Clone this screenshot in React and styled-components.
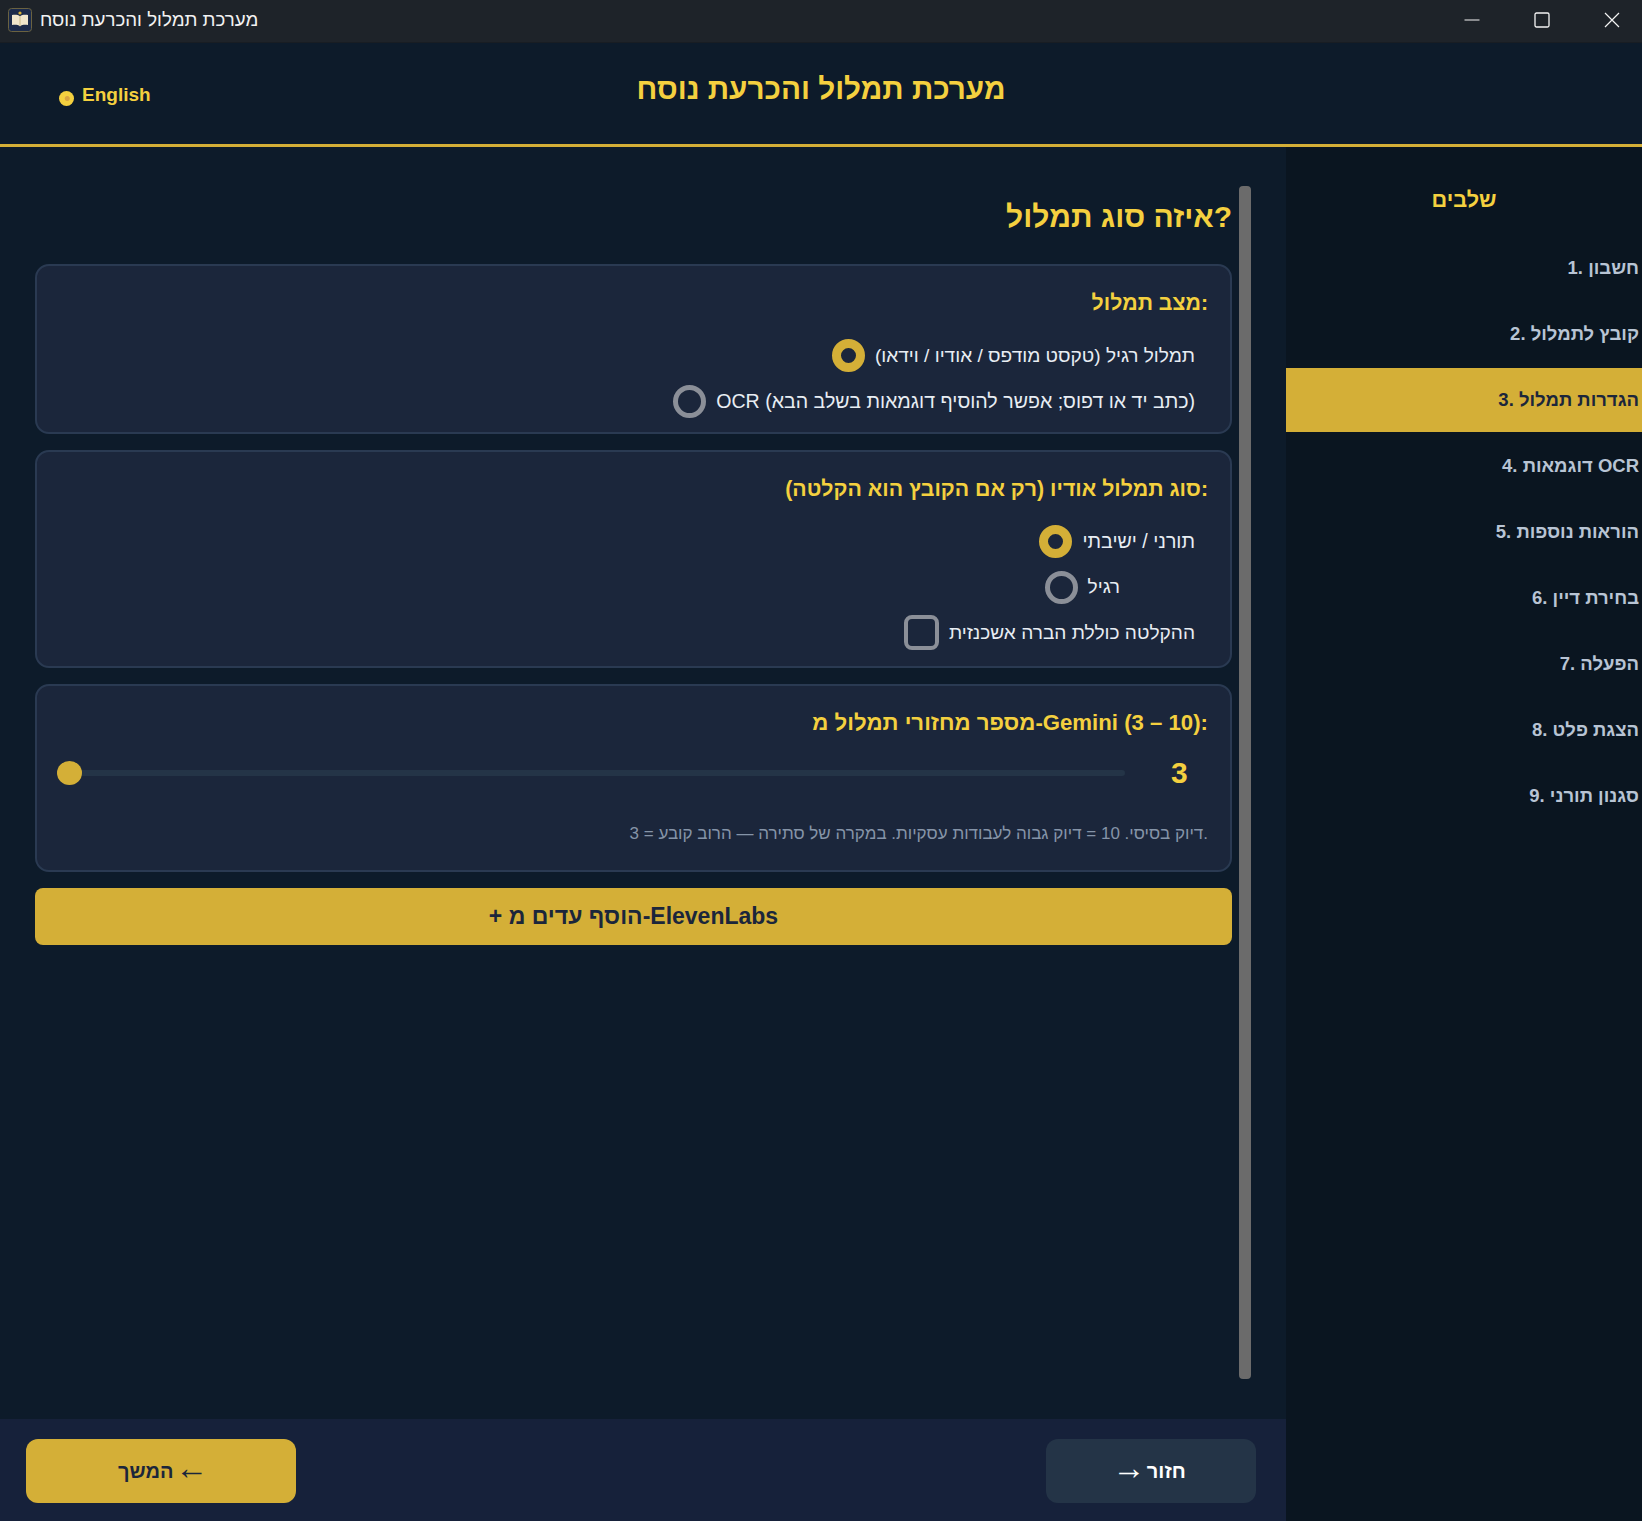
import React from 'react';
import styled, { createGlobalStyle } from 'styled-components';

const GOLD = '#d4af37';
const GOLD_TEXT = '#f4d03f';

const GlobalStyle = createGlobalStyle`
  html, body, #root {
    margin: 0;
    height: 100%;
  }
  body {
    background: #0d1b2a;
    font-family: "Liberation Sans", Arial, sans-serif;
  }
  * {
    box-sizing: border-box;
  }
`;

const Window = styled.div`
  height: 100%;
  display: flex;
  flex-direction: column;
  overflow: hidden;
`;

/* Title bar of the native window */
const TitleBar = styled.div`
  height: 43px;
  flex: none;
  display: flex;
  align-items: center;
  padding: 0 0 3px 8px;
  background: #1e2329;
  border-bottom: 1px solid #181d23;
`;

const AppTitle = styled.span`
  margin-left: 8px;
  flex: 1;
  color: #f2f2f2;
  font-size: 18.7px;
`;

const WinControls = styled.div`
  display: flex;
  margin-right: -5px;
`;

const WinButton = styled.div`
  width: 70px;
  height: 38px;
  display: flex;
  align-items: center;
  justify-content: center;
  color: #f4f4f4;
`;

const Header = styled.header`
  height: 104px;
  flex: none;
  position: relative;
  display: flex;
  align-items: center;
  justify-content: center;
  background: #0d1b2a;
  border-bottom: 3px solid ${GOLD};
`;

const HeaderTitle = styled.h1`
  margin: 0 0 10px;
  color: ${GOLD_TEXT};
  font-size: 29.7px;
  font-weight: 700;
`;

/* Sits over the header's left end, the title stays centred on the page */
const LangButton = styled.div`
  position: absolute;
  left: 59px;
  top: 41px;
  display: flex;
  align-items: flex-end;
  gap: 8px;
  color: ${GOLD_TEXT};
  font-size: 19px;
  font-weight: 700;
`;

const GlobeDot = styled.span`
  width: 15px;
  height: 15px;
  border-radius: 50%;
  background: radial-gradient(circle at 55% 50%, #d9a441 0 2px, ${GOLD_TEXT} 3px);
`;

const Main = styled.div`
  flex: 1;
  display: flex;
  min-height: 0;
`;

const Content = styled.div`
  flex: 1;
  display: flex;
  flex-direction: column;
  min-width: 0;
`;

const ScrollArea = styled.div`
  flex: 1;
  display: flex;
  gap: 7px;
  padding: 39px 35px 40px 35px;
  min-height: 0;
`;

const Form = styled.div`
  flex: 1;
  display: flex;
  flex-direction: column;
  gap: 16px;
  min-width: 0;
`;

const ScrollThumb = styled.div`
  width: 12px;
  flex: none;
  border-radius: 4px;
  background: #6b6b6b;
`;

const PageTitle = styled.h2`
  height: 62px;
  margin: 0;
  padding-top: 14px;
  text-align: right;
  color: ${GOLD_TEXT};
  font-size: 30px;
  font-weight: 700;
`;

const Card = styled.section`
  height: ${(props) => props.$height}px;
  padding: 22px 22px 0;
  background: #1b263b;
  border: 2px solid #2a3a52;
  border-radius: 14px;
`;

const CardHeading = styled.div`
  height: 30px;
  line-height: 30px;
  text-align: right;
  color: ${GOLD_TEXT};
  font-size: ${(props) => props.$size || 21.3}px;
  font-weight: 700;
`;

const OptionList = styled.div`
  margin-top: 15px;
  padding-right: 13px;
  display: flex;
  flex-direction: column;
  align-items: flex-end;
`;

const Option = styled.label`
  height: 45.5px;
  margin-right: ${(props) => props.$inset || 0}px;
  display: flex;
  align-items: center;
  gap: 10px;
  color: #e8edf3;
  font-size: ${(props) => props.$size || 19.1}px;
`;

const Radio = styled.span`
  width: 33px;
  height: 33px;
  flex: none;
  border-radius: 50%;
  border: ${(props) => (props.$checked ? `9px solid ${GOLD}` : '5px solid #8b8f98')};
  background: ${(props) => (props.$checked ? '#1b263b' : 'transparent')};
`;

const Checkbox = styled.span`
  width: 35px;
  height: 35px;
  flex: none;
  border-radius: 8px;
  border: 4px solid #8b8f98;
`;

const SliderRow = styled.div`
  margin-top: 20px;
  height: 30px;
  display: flex;
  align-items: center;
`;

const Value = styled.span`
  width: 83px;
  padding-left: 46px;
  flex: none;
  order: 2;
  color: ${GOLD_TEXT};
  font-size: 30px;
  font-weight: 700;
`;

const Track = styled.div`
  flex: 1;
  height: 6px;
  position: relative;
  border-radius: 3px;
  background: #243447;
`;

const Thumb = styled.span`
  position: absolute;
  left: -2px;
  top: -9px;
  width: 25px;
  height: 24px;
  border-radius: 50%;
  background: ${GOLD};
`;

const Note = styled.p`
  margin: 36px 0 0;
  text-align: right;
  color: #8594a8;
  font-size: 17px;
`;

const WideButton = styled.button`
  height: 57px;
  flex: none;
  border: none;
  border-radius: 8px;
  background: ${GOLD};
  color: #1b263b;
  font-family: inherit;
  font-size: 23px;
  font-weight: 700;
`;

const Footer = styled.footer`
  height: 102px;
  flex: none;
  display: flex;
  align-items: flex-start;
  justify-content: space-between;
  padding: 20px 30px 0 26px;
  background: #16213a;
`;

const FooterButton = styled.button`
  width: ${(props) => (props.$primary ? 270 : 210)}px;
  height: 64px;
  padding: ${(props) => (props.$primary ? '0 0 0 4px' : '0 4px 0 0')};
  border: none;
  border-radius: 12px;
  background: ${(props) => (props.$primary ? GOLD : '#243447')};
  color: ${(props) => (props.$primary ? '#1b263b' : '#ffffff')};
  font-family: inherit;
  font-size: 20px;
  font-weight: 700;
  word-spacing: -4px;
`;

const Arrow = styled.span`
  font-size: 33px;
  font-weight: 400;
  line-height: 0;
  vertical-align: -1px;
`;

const Sidebar = styled.nav`
  width: 356px;
  flex: none;
  padding-top: 40px;
  background: #0a1520;
`;

const SideTitle = styled.div`
  height: 49px;
  text-align: center;
  color: ${GOLD_TEXT};
  font-size: 21.7px;
  font-weight: 700;
`;

const NavList = styled.div`
  display: flex;
  flex-direction: column;
  gap: 2px;
`;

const NavItem = styled.div`
  height: 64px;
  display: flex;
  align-items: center;
  justify-content: flex-end;
  padding-right: 3px;
  background: ${(props) => (props.$active ? GOLD : 'transparent')};
  color: ${(props) => (props.$active ? '#1b263b' : '#b8c4d4')};
  font-size: 18.5px;
  font-weight: 700;
`;

const steps = [
  '1. חשבון',
  '2. קובץ לתמלול',
  '3. הגדרות תמלול',
  '4. דוגמאות OCR',
  '5. הוראות נוספות',
  '6. בחירת דיין',
  '7. הפעלה',
  '8. הצגת פלט',
  '9. סגנון תורני',
];

const AppIcon = () => (
  <svg width="24" height="24" viewBox="0 0 24 24">
    <rect x="0.5" y="0.5" width="23" height="23" rx="3" fill="#1b2a4a" stroke="#6b6240" />
    <circle cx="12" cy="5" r="1.6" fill={GOLD} />
    <path d="M4 7c3-.6 6-.3 8 1.2C14 6.700 17 6.400 20 7v10c-3-.6-6-.3-8 1.200C10 16.700 7 16.400 4 17z" fill="#f0e6cc" />
    <path d="M12 8.200v10" stroke="#c9b98a" strokeWidth="1" />
  </svg>
);

const App = () => (
  <Window>
    <GlobalStyle />
    <TitleBar>
      <AppIcon />
      <AppTitle>מערכת תמלול והכרעת נוסח</AppTitle>
      <WinControls>
        <WinButton>
          <svg width="16" height="16" viewBox="0 0 16 16"><path d="M0.500 8h15" stroke="currentColor" /></svg>
        </WinButton>
        <WinButton>
          <svg width="16" height="16" viewBox="0 0 16 16"><rect x="1" y="1" width="14" height="14" rx="1.500" fill="none" stroke="currentColor" strokeWidth="1.300" /></svg>
        </WinButton>
        <WinButton>
          <svg width="16" height="16" viewBox="0 0 16 16"><path d="M1 1l14 14M15 1L1 15" stroke="currentColor" strokeWidth="1.200" /></svg>
        </WinButton>
      </WinControls>
    </TitleBar>

    <Header>
      <LangButton>
        <GlobeDot />
        English
      </LangButton>
      <HeaderTitle>מערכת תמלול והכרעת נוסח</HeaderTitle>
    </Header>

    <Main>
      <Content>
        <ScrollArea>
          <Form>
            <PageTitle>איזה סוג תמלול?</PageTitle>

            <Card $height={170}>
              <CardHeading>מצב תמלול:</CardHeading>
              <OptionList>
                <Option>
                  <Radio $checked />
                  תמלול רגיל (טקסט מודפס / אודיו / וידאו)
                </Option>
                <Option $size={19.6}>
                  <Radio />
                  OCR (כתב יד או דפוס; אפשר להוסיף דוגמאות בשלב הבא)
                </Option>
              </OptionList>
            </Card>

            <Card $height={218}>
              <CardHeading>סוג תמלול אודיו (רק אם הקובץ הוא הקלטה):</CardHeading>
              <OptionList>
                <Option $size={19.6}>
                  <Radio $checked />
                  תורני / ישיבתי
                </Option>
                <Option $inset={75}>
                  <Radio />
                  רגיל
                </Option>
                <Option>
                  <Checkbox />
                  ההקלטה כוללת הברה אשכנזית
                </Option>
              </OptionList>
            </Card>

            <Card $height={188}>
              <CardHeading $size={22.2}>מספר מחזורי תמלול מ-Gemini (3 – 10):</CardHeading>
              <SliderRow>
                <Value>3</Value>
                <Track>
                  <Thumb />
                </Track>
              </SliderRow>
              <Note>3 = דיוק בסיסי. 10 = דיוק גבוה לעבודות עסקיות. במקרה של סתירה — הרוב קובע.</Note>
            </Card>

            <WideButton>+ הוסף עדים מ-ElevenLabs</WideButton>
          </Form>
          <ScrollThumb />
        </ScrollArea>

        <Footer>
          <FooterButton $primary>המשך <Arrow>←</Arrow></FooterButton>
          <FooterButton><Arrow>→</Arrow> חזור</FooterButton>
        </Footer>
      </Content>

      <Sidebar>
        <SideTitle>שלבים</SideTitle>
        <NavList>
          {steps.map((step, i) => (
            <NavItem key={step} $active={i === 2}>{step}</NavItem>
          ))}
        </NavList>
      </Sidebar>
    </Main>
  </Window>
);

export default App;
